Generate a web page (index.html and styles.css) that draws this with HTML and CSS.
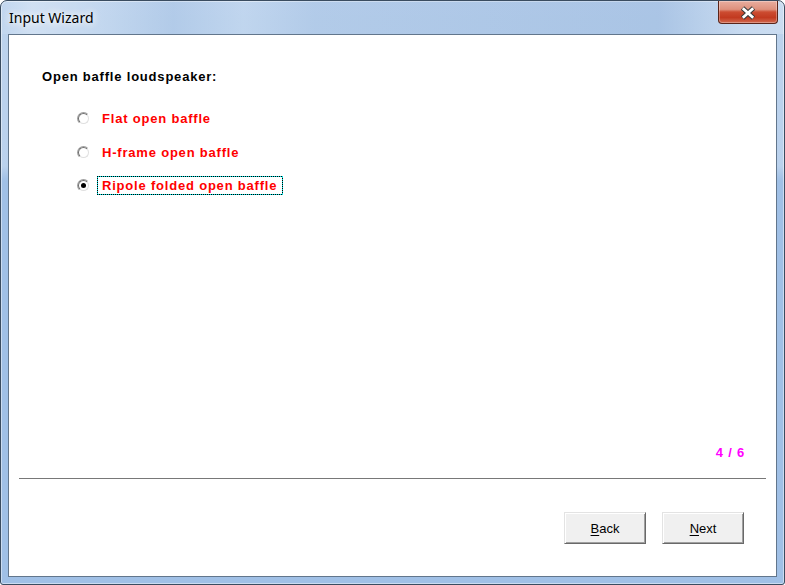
FILE: index.html
```html
<!DOCTYPE html>
<html>
<head>
<meta charset="utf-8">
<title>Input Wizard</title>
<link rel="stylesheet" href="styles.css">
</head>
<body>
<div class="window">
  <div class="titlebar">
    <span class="title">Input Wizard</span>
    <button class="close" aria-label="Close">
      <svg width="16" height="14" viewBox="0 0 16 14">
        <path d="M2.5 2 L13.5 12 M13.5 2 L2.5 12" stroke="#3b3b3b" stroke-width="5" fill="none"/>
        <path d="M2.8 2.3 L13.2 11.7 M13.2 2.3 L2.8 11.7" stroke="#ffffff" stroke-width="2.8" fill="none"/>
      </svg>
    </button>
  </div>
  <div class="client">
    <div class="heading">Open baffle loudspeaker:</div>
    <div class="options">
      <div class="option">
        <span class="radio"><span class="radio-inner"></span></span>
        <span class="label">Flat open baffle</span>
      </div>
      <div class="option">
        <span class="radio"><span class="radio-inner"></span></span>
        <span class="label">H-frame open baffle</span>
      </div>
      <div class="option">
        <span class="radio"><span class="radio-inner"><span class="dot"></span></span></span>
        <span class="label focused">Ripole folded open baffle</span>
      </div>
    </div>
    <div class="footer">
      <div class="counter">4 / 6</div>
      <div class="separator"></div>
      <div class="buttons">
        <button class="btn"><u>B</u>ack</button>
        <button class="btn"><u>N</u>ext</button>
      </div>
    </div>
  </div>
</div>
</body>
</html>
```
FILE: styles.css
```css
* { box-sizing: border-box; }

html, body {
  margin: 0;
  padding: 0;
  width: 785px;
  height: 585px;
  overflow: hidden;
  background: #ffffff;
}

.window {
  width: 785px;
  height: 585px;
  display: flex;
  flex-direction: column;
  border: 1px solid #3a4c60;
  border-radius: 7px 7px 3px 3px;
  background:
    linear-gradient(180deg, rgba(255,255,255,0.3) 0, rgba(255,255,255,0.28) 165px, rgba(255,255,255,0) 180px),
    #a0c0e6;
  box-shadow: inset 0 0 0 1px rgba(255,255,255,0.45);
  overflow: hidden;
}

.titlebar {
  height: 33px;
  flex: 0 0 33px;
  display: flex;
  justify-content: space-between;
  align-items: flex-start;
  background: linear-gradient(90deg,
    rgba(255,255,255,0.08) 0,
    rgba(255,255,255,0.3) 4%,
    rgba(255,255,255,0.12) 12%,
    rgba(60,110,180,0.08) 22%,
    rgba(255,255,255,0.06) 31%,
    rgba(60,110,180,0.08) 40%,
    rgba(60,110,180,0.12) 70%,
    rgba(60,110,180,0.14) 84%,
    rgba(255,255,255,0.18) 95%,
    rgba(255,255,255,0.22) 100%);
}

.title {
  font-family: "Noto Sans", "Open Sans", sans-serif;
  font-size: 14px;
  line-height: 19px;
  color: #000;
  padding: 7px 0 0 8px;
  text-shadow: 0 0 6px rgba(255,255,255,0.9), 0 0 10px rgba(255,255,255,0.8), 0 0 14px rgba(255,255,255,0.6);
}

.close {
  width: 60px;
  height: 23px;
  margin: 0 6px 0 0;
  padding: 0;
  display: flex;
  align-items: center;
  justify-content: center;
  border: 1px solid #5a2419;
  border-top: none;
  border-radius: 0 0 4px 4px;
  background: linear-gradient(180deg, #e8ad9f 0%, #de917d 38%, #cc4c31 50%, #c23a20 75%, #d26a50 100%);
  box-shadow: inset 0 0 0 1px rgba(255,255,255,0.3);
}

.close svg { display: block; margin-top: 1px; }

.client {
  flex: 1 1 auto;
  margin: 0 7px 7px 7px;
  border: 1px solid #62768c;
  background: #ffffff;
  display: flex;
  flex-direction: column;
  padding: 34px 0 32px 0;
  font-family: "Liberation Sans", Arial, sans-serif;
  font-size: 13px;
}

.heading {
  margin-left: 33px;
  font-weight: bold;
  line-height: 16px;
  letter-spacing: 0.8px;
  color: #000;
}

.options {
  margin: 24px 0 0 68px;
  display: flex;
  flex-direction: column;
  gap: 14.5px;
}

.option {
  display: flex;
  align-items: center;
  height: 19px;
}

.radio {
  width: 13px;
  height: 13px;
  border-radius: 50%;
  border: 1px solid;
  border-color: #a0a0a0 #ffffff #ffffff #a0a0a0;
  margin-right: 7px;
  flex: 0 0 13px;
  display: flex;
}

.radio-inner {
  flex: 1;
  border-radius: 50%;
  border: 1px solid;
  border-color: #6e6e6e #e0e0e0 #e0e0e0 #6e6e6e;
  background: #ffffff;
  display: flex;
  align-items: center;
  justify-content: center;
}

.dot {
  width: 5px;
  height: 5px;
  border-radius: 50%;
  background: #000;
}

.label {
  border: 1px solid transparent;
  padding: 0 5px 0 4px;
  line-height: 17px;
  font-weight: bold;
  letter-spacing: 0.8px;
  color: #ff0000;
}

.label.focused {
  background:
    repeating-linear-gradient(90deg, #000 0 1px, #00e0e0 1px 2px) top left / 100% 1px no-repeat,
    repeating-linear-gradient(90deg, #000 0 1px, #00e0e0 1px 2px) bottom left / 100% 1px no-repeat,
    repeating-linear-gradient(180deg, #000 0 1px, #00e0e0 1px 2px) top left / 1px 100% no-repeat,
    repeating-linear-gradient(180deg, #000 0 1px, #00e0e0 1px 2px) top right / 1px 100% no-repeat;
  background-origin: border-box;
}

.footer {
  margin-top: auto;
  display: flex;
  flex-direction: column;
}

.counter {
  text-align: right;
  padding-right: 31px;
  font-weight: bold;
  line-height: 16px;
  letter-spacing: 0.8px;
  color: #ff00ff;
}

.separator {
  margin: 17px 10px 0 10px;
  height: 1px;
  background: #787878;
}

.buttons {
  margin-top: 33px;
  display: flex;
  justify-content: flex-end;
  gap: 16px;
  padding-right: 32px;
}

.btn {
  width: 82px;
  height: 32px;
  margin: 0;
  padding: 0;
  font-family: "Liberation Sans", Arial, sans-serif;
  font-size: 13px;
  color: #000;
  background: #f0f0f0;
  border: 1px solid;
  border-color: #e3e3e3 #696969 #696969 #e3e3e3;
  border-radius: 0;
  box-shadow: inset 1px 1px 0 #ffffff, inset -1px -1px 0 #a0a0a0;
}

.btn u { text-decoration-thickness: 1px; text-underline-offset: 2px; }
```
